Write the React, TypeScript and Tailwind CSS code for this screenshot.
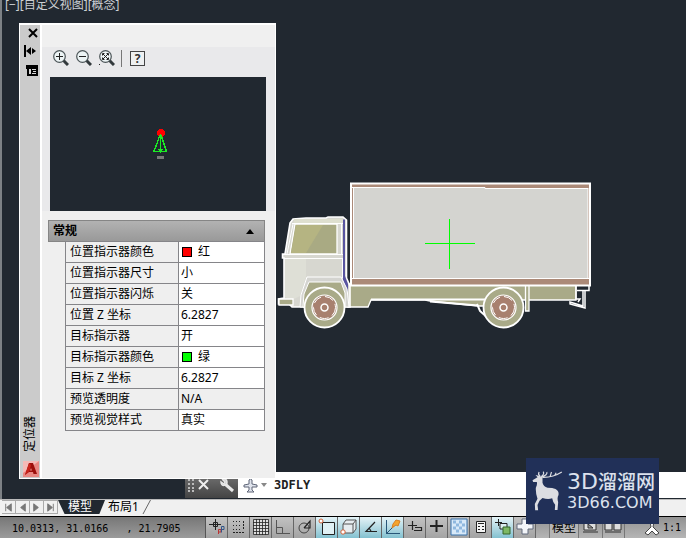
import React, { useState } from 'react';

type Property = { label: string; value: string; color?: 'red' | 'green'; readOnly?: boolean };

const PROPERTIES: Property[] = [
  { label: '位置指示器颜色', value: '红', color: 'red' },
  { label: '位置指示器尺寸', value: '小' },
  { label: '位置指示器闪烁', value: '关' },
  { label: '位置 Z 坐标', value: '6.2827' },
  { label: '目标指示器', value: '开' },
  { label: '目标指示器颜色', value: '绿', color: 'green' },
  { label: '目标 Z 坐标', value: '6.2827' },
  { label: '预览透明度', value: 'N/A', readOnly: true },
  { label: '预览视觉样式', value: '真实' },
];

const Truck: React.FC = () => (
  <svg className="absolute left-[275px] top-[178px] h-[152px] w-[320px]" viewBox="277 178 320 152" stroke="#fff" strokeWidth="1.3" role="img" aria-label="truck">
    {/* chassis */}
    <path d="M349 284H576V300H488V306H478L430 301L425 300H371L368 307H348Z" fill="#a9aa88" />
    <path d="M371 299.500H486M430 301.500L478 305.500M477 304L480 311L490 320" fill="none" strokeWidth="2" />
    <path d="M525.500 286V311H529V286" fill="#a9aa88" />
    <path d="M576 286V299H580L578 302M577 290.500H589V286" fill="none" strokeWidth="1.500" />
    <path d="M583 291V306L570 302V304L585 308V291" fill="none" strokeWidth="1.500" />
    {/* cargo box */}
    <path d="M351 183.500H590V285.500H351Z" fill="#ab8a78" strokeWidth="2" />
    <path d="M353.500 187.500H485V188.500H588V278.500H353.500Z" fill="#d4d4d0" stroke="none" />
    <path d="M352 187.500H485V188.500H588M351 278.500H590M353.500 188V278M588 188V278" fill="none" strokeWidth="1" />
    {/* cab */}
    <path d="M290 223L293 219L306 218L326 218L328 217H343L346.500 220V278L350 286V307H292L289 304H278.500V299L284 298V258H282.500V254H285Z" fill="#d7d7d0" strokeWidth="1.6" />
    <path d="M285 259H306V277L300 296L292 300L285 297Z" fill="#dedfd6" stroke="none" />
    <path d="M294 219H342L345 223H294Z" fill="#dedfcf" stroke="none" />
    <path d="M295 224H337V254H290Z" fill="#a9aa83" />
    <path d="M296 225H323L306 253H291Z" fill="#b5b482" stroke="none" />
    <path d="M292 223.500H345M283 254.500H345M284 258.500H345M341.500 224V254M342.500 258V278M293 224L287 254" fill="none" strokeWidth="1" />
    <path d="M343 219.500H345V276L348 284V293L343 280Z" fill="#5854a0" stroke="none" />
    <path d="M279 299H293V305H279Z" fill="#a9aa88" />
    <path d="M300 307L301 295L307 277H341L347 289L349 307Z" fill="#d4d4d0" strokeWidth="1" />
    <path d="M303 307L304 294L309 282H341L345 293V307Z" fill="#a9aa88" strokeWidth="1" />
    {[324.5, 503.5].map((cx) => (
      <g key={cx}>
        <circle cx={cx} cy="307.500" r="20" fill="#a9aa88" strokeWidth="1.8" />
        <circle cx={cx} cy="307.500" r="12.500" fill="#ab8a78" strokeWidth="1.200" />
        <circle cx={cx} cy="307.500" r="11" fill="#a8806f" strokeWidth="1" strokeDasharray="9 4" />
        <circle cx={cx} cy="307.500" r="3.500" fill="#a8806f" strokeWidth="1.5" />
      </g>
    ))}
    {/* 3D crosshair */}
    <path d="M425 243H475V244H425ZM449 219H450V269H449Z" fill="#0f0" stroke="none" />
  </svg>
);

const Magnifier: React.FC<{ kind: 'in' | 'out' | 'extents' }> = ({ kind }) => (
  <svg className="h-4 w-4" viewBox="0 0 16 16" fill="none">
    <path d="M10.500 10.500L15 15" stroke="#333a3d" strokeWidth="3" />
    <circle cx="6.500" cy="6.500" r="5.800" fill="#edf4f5" stroke="#4c5558" strokeWidth="1.200" />
    {kind === 'in' && <path d="M3 6.500H10M6.500 3V10" stroke="#222" />}
    {kind === 'out' && <path d="M3 6.500H10" stroke="#222" />}
    {kind === 'extents' && <path d="M3.500 5.500V3.500H5.500M7.500 3.500H9.500V5.500M9.500 7.500V9.500H7.500M5.500 9.500H3.500V7.500M4 4L9 9M9 4L4 9" stroke="#222" />}
    {kind === 'extents' && <path d="M0 14H1V15H0Z" fill="#222" />}
  </svg>
);

const Palette: React.FC = () => {
  const [open, setOpen] = useState(true);

  return (
    <section className="absolute bottom-[20px] left-[17px] top-[23px] flex w-[257px] border border-t-2 border-white bg-[#efefef]">
      <div className="flex w-[20px] flex-col items-center bg-[#cbcbcb]">
        <button aria-label="关闭" className="mt-[2px] ml-[6px] h-[12px] w-[12px]">
          <svg viewBox="0 0 12 12" stroke="#000" strokeWidth="2"><path d="M2 2L10 10M10 2L2 10" /></svg>
        </button>
        <button aria-label="自动隐藏" className="mt-[6px] h-[12px] w-[14px]">
          <svg viewBox="0 0 14 12"><path d="M1 0H3V12H1ZM8 2V10L3 6ZM9 3V9L13 6Z" /></svg>
        </button>
        <button aria-label="特性" className="mt-[8px] ml-[4px] h-[12px] w-[12px]">
          <svg viewBox="0 0 12 12"><path d="M0 0H12V11H1V4H0Z" /><path d="M3 4H5V9H3ZM6 4H10V5H6ZM7 6H10V7H7ZM6 8H10V9H6Z" fill="#d5d5d5" /></svg>
        </button>
        <h2 className="mt-auto mb-[9px] rotate-180 text-xs leading-[14px] [text-orientation:sideways] [writing-mode:vertical-rl]">定位器</h2>
        <svg className="mb-px ml-[2px] h-[16px] w-[16px]" viewBox="0 0 16 16">
          <path d="M0 0H16V16H0Z" fill="#e98782" />
          <path d="M0 0H16L0 12Z" fill="#f5b9b6" />
          <path d="M6 2H10L14 13H10.500L10 11H6L2 14Z" fill="#9c0f0b" />
          <path d="M6 2L8 4L6.500 10L2 14Z" fill="#c8231b" />
          <path d="M8 7L9 9.500H7Z" fill="#e98782" />
        </svg>
      </div>
      <div className="flex-1 border-l-2 border-white">
        <div className="h-[22px] bg-[#f0f0f0]" />
        <div className="flex h-[30px] items-center gap-[7px] bg-[#e9e9eb] pb-2 pl-[11px]">
          <button aria-label="放大"><Magnifier kind="in" /></button>
          <button aria-label="缩小"><Magnifier kind="out" /></button>
          <button aria-label="范围缩放"><Magnifier kind="extents" /></button>
          <div className="-ml-px h-[17px] w-px bg-[#777]" />
          <button aria-label="帮助" className="ml-px h-[15px] w-[15px] border border-[#444] bg-[#eef0f1] text-[12px] font-bold leading-[13px] text-[#333]">?</button>
        </div>
        <div className="bg-[#e9e9eb]">
          <div className="ml-[8px] mr-[9px] flex h-[134px] items-center justify-center bg-[#212830]">
            <svg className="ml-[4px] h-[30px] w-[16px]" viewBox="0 0 16 30" fill="none" shapeRendering="crispEdges">
              <circle cx="9" cy="4" r="4" fill="#f00" />
              <path d="M8.500 5V24M8 6L2 22.500H14.500L9 6M5 14L2 22M12 14L14 22" stroke="#1bea25" strokeWidth="1.300" />
              <path d="M6 20H11L8.500 24Z" fill="#1bea25" />
              <path d="M5 27H12V30H5Z" fill="#777" />
            </svg>
          </div>
        </div>
        <div className="mr-[10px] ml-[6px] mt-[9px] text-xs text-black">
          <button onClick={() => setOpen(!open)} className="flex h-[22px] w-full items-center justify-between border border-[#858585] bg-linear-to-b from-[#b2b2b2] to-[#999] pl-1 pr-[10px] font-bold">
            常规
            <svg className="h-[5px] w-[8px]" viewBox="0 0 8 5"><path d="M4 0L8 5H0Z" /></svg>
          </button>
          {open && (
            <div className="-mt-px pl-[17px]">
              <table className="w-full table-fixed border-collapse">
                <tbody>
                  {PROPERTIES.map((p) => (
                    <tr key={p.label} className="h-[21px]">
                      <th scope="row" className="w-[113px] border border-[#858589] p-0 pl-1 text-left font-normal leading-[20px]">{p.label}</th>
                      <td className={`border border-[#858589] p-0 pl-[2px] leading-[20px] ${p.readOnly ? 'bg-[#efefef]' : 'bg-white'}`}>
                        <span className="flex items-center gap-[6px]">
                          {p.color && <span className={`ml-px h-[10px] w-[10px] border border-black ${p.color === 'red' ? 'bg-[#f00]' : 'bg-[#0f0]'}`} />}
                          {p.value}
                        </span>
                      </td>
                    </tr>
                  ))}
                </tbody>
              </table>
            </div>
          )}
        </div>
      </div>
    </section>
  );
};

const CommandLine: React.FC = () => (
  <form className="absolute bottom-px left-[183px] right-0 flex h-[26px] bg-white">
    <div className="flex w-[53px] items-center gap-2 bg-linear-to-b from-[#777] to-[#444] pl-[3px]">
      <svg className="h-[14px] w-[6px]" viewBox="0 0 6 14" fill="#bbb"><path d="M0 1H2V3H0ZM4 1H6V3H4ZM0 5H2V7H0ZM4 5H6V7H4ZM0 9H2V11H0ZM4 9H6V11H4ZM0 12H2V14H0ZM4 12H6V14H4Z" /></svg>
      <button type="button" aria-label="关闭命令行" className="ml-[-5px] h-[14px] w-[14px]">
        <svg viewBox="0 0 14 14" stroke="#eee" strokeWidth="2"><path d="M2 2L11 11M11 2L2 11" /></svg>
      </button>
      <button type="button" aria-label="自定义" className="h-[16px] w-[16px]">
        <svg viewBox="0 0 16 16" fill="none" stroke="#e8e8e8"><path d="M6 7L14 14" strokeWidth="3" /><path d="M3 2L6 5L5 7L2 5C2 10 8 9 8 5C8 2 5 1 3 2" strokeWidth="1.500" fill="#ccc" /></svg>
      </button>
    </div>
    <button type="button" aria-label="最近使用的命令" className="flex items-center gap-[3px] pl-[5px]">
      <svg className="h-[15px] w-[15px]" viewBox="0 0 15 15" fill="#dfe3ec" stroke="#5e6577"><path d="M6 6V2Q7.500 0 9 2V6L14 7V9H9V12L11 14H4L6 12V9H1V7Z" /></svg>
      <svg className="h-[4px] w-[6px]" viewBox="0 0 6 4" fill="#888"><path d="M0 0H6L3 4Z" /></svg>
    </button>
    <input aria-label="命令" defaultValue="3DFLY" className="ml-[7px] min-w-0 flex-1 bg-transparent font-['DejaVu_Sans_Mono',monospace] text-[12px] font-bold text-[#222] outline-none" />
  </form>
);

const LayoutTabs: React.FC = () => (
  <nav className="flex h-[17px] shrink-0 border-t border-[#bbb] bg-[#f0f0f0] pl-[2px] text-xs">
    {[
      { label: '第一个', d: 'M4 3V11M10 3V11L5 7Z' },
      { label: '上一个', d: 'M10 3V11L5 7Z' },
      { label: '下一个', d: 'M4 3V11L9 7Z' },
      { label: '最后一个', d: 'M10 3V11M4 3V11L9 7Z' },
    ].map((b) => (
      <button key={b.label} aria-label={b.label} className="h-[14px] w-[14px] border border-l-0 border-[#aaa]">
        <svg viewBox="0 0 14 14" fill="#777" stroke="#777"><path d={b.d} /></svg>
      </button>
    ))}
    <button className="h-[14px] w-[47px] bg-[#212830] pr-[3px] leading-[14px] text-white [clip-path:polygon(0_0,100%_0,88%_100%,14%_100%)]">模型</button>
    <button className="h-[14px] pl-[3px] leading-[14px] text-black">布局1</button>
    <svg className="ml-[3px] h-[14px] w-[9px]" viewBox="0 0 9 14" stroke="#666"><path d="M8.500 0L1 14" /></svg>
  </nav>
);

const TOGGLES: { label: string; on?: boolean; icon: React.ReactNode }[] = [
  { label: '推断约束', icon: <><path d="M7.500 1V12M1 6.500H13M5.500 4.500H9.500V8.500H5.500Z" /><path d="M10.500 16V11.500H13V14H11" stroke="#b33" /><path d="M13.500 14.500V8.500H16V11.500H14" stroke="#358" /></> },
  { label: '捕捉', icon: <><path d="M3 3.500H12M3 7.500H12M3 11.500H12" strokeDasharray="1 2" /><path d="M13.500 3V12M3 14.500H14" strokeDasharray="2 1" /></> },
  { label: '栅格', icon: <path d="M1.500 1.500H16.500V16.500H1.500ZM4.500 1V17M7.500 1V17M10.500 1V17M13.500 1V17M1 4.500H17M1 7.500H17M1 10.500H17M1 13.500H17" strokeWidth="0.800" fill="#ddd" /> },
  { label: '正交', icon: <path d="M2.500 2V15.500H16M3 9.500H8.500V15" stroke="#555" /> },
  { label: '极轴', icon: <><circle cx="8" cy="10" r="5" stroke="#444" /><path d="M8 10L14 3V10H8" strokeWidth="1.200" /></> },
  { label: '对象捕捉', on: true, icon: <><path d="M4.500 4.500H16.500V16.500H4.500Z" fill="#e0f1f5" /><circle cx="3" cy="3" r="2" stroke="#d26036" fill="#fff" /></> },
  { label: '三维对象捕捉', on: true, icon: <><path d="M3 6L6 2H16V11L13 15H3ZM3 6H13V15M13 6L16 2" fill="#e7edf0" stroke="#555" /><circle cx="3" cy="14" r="2.200" stroke="#d26036" fill="#fff" /></> },
  { label: '对象追踪', on: true, icon: <path d="M13 4L4 13.500H15M7 10L9 13" strokeWidth="1.200" /> },
  { label: '动态UCS', on: true, icon: <><path d="M2.500 2V15.500H16M2 16L12 6" stroke="#285678" /><path d="M9 6L12 2L16 3L14 8L12 7L8 10Z" fill="#f5a52d" stroke="#d77e23" /></> },
  { label: '动态输入', icon: <path d="M2 7.500H11M6.500 3V12M9 9.500H15.500V12.500H8" strokeWidth="1.200" /> },
  { label: '线宽', icon: <path d="M2 8H15M8.500 2V14" strokeWidth="2" /> },
  { label: '透明度', icon: <><path d="M1 1H17V17H1Z" fill="#d8e9f8" stroke="#3972ad" /><path d="M3 4H15M3 10H15" stroke="#8fb8df" strokeWidth="3" strokeDasharray="3 3" /><path d="M6 7H15M6 13H15" stroke="#8fb8df" strokeWidth="3" strokeDasharray="3 3" /></> },
  { label: '快捷特性', icon: <><path d="M4.500 3.500H13.500V14.500H4.500Z" fill="#f5f5f5" /><path d="M6 5.500H12M6 8.500H8M10 8.500H12M6 11.500H8M10 11.500H12" /></> },
  { label: '选择循环', on: true, icon: <><path d="M1 4.500H8M4.500 1V8" /><path d="M6 5.500H13V11H6Z" fill="#dceef0" /><path d="M9 9H16V16H9Z" fill="#7db864" stroke="#34672b" /></> },
  { label: '注释监视器', icon: <path d="M6 1H12V6H17V11H12V16H6V11H1V6H6Z" fill="#f2f4f8" stroke="#626b7c" /> },
];

const StatusBar: React.FC = () => (
  <footer className="flex h-[22px] shrink-0 overflow-hidden border-t border-black bg-linear-to-b from-[#929292] to-[#b5b5b5] text-black">
    <output className="w-[206px] shrink-0 whitespace-pre border-r border-[#555] bg-linear-to-b from-[#777] to-[#9b9b9b] pl-[12px] pt-[3px] font-['DejaVu_Sans_Mono',monospace] text-[10px] leading-[18px]">{'10.0313, 31.0166   , 21.7905'}</output>
    {TOGGLES.map((t) => (
      <button key={t.label} aria-label={t.label} aria-pressed={!!t.on} className={`flex w-[22px] shrink-0 justify-center border-r border-[#666] pt-px ${t.on ? 'bg-linear-to-b from-[#e4f3f7] to-[#83c1d0]' : 'bg-linear-to-b from-[#c2c2c2] to-[#a3a3a3]'}`}>
        <svg className="h-[18px] w-[18px]" viewBox="0 0 18 18" fill="none" stroke="#222">{t.icon}</svg>
      </button>
    ))}
    <div className="ml-auto flex text-xs leading-[21px]">
      <button className="border-x border-[#777] bg-[#b5b5b5] px-[2px]">模型</button>
      <button aria-label="快速查看布局" className="w-[24px] border-r border-[#777] pt-[1px] pl-[3px]">
        <svg className="h-[18px] w-[18px]" viewBox="0 0 18 18" fill="#ddd" stroke="#333"><path d="M2 3H14V11H2ZM1 13H16M6 5V9H11Z" /></svg>
      </button>
      <button aria-label="快速查看图形" className="w-[22px] border-r border-[#777] pt-[1px] pl-px">
        <svg className="h-[18px] w-[18px]" viewBox="0 0 18 18" fill="#ddd" stroke="#333"><path d="M1 4H8V11H1ZM10 4H17V11H10ZM1 13H17" /></svg>
      </button>
      <button className="flex items-center gap-[3px] pl-[19px] pr-[5px] font-['DejaVu_Sans_Mono',monospace] text-[10px]">
        <svg className="h-[16px] w-[16px]" viewBox="0 0 16 16" fill="#fff" stroke="#444"><path d="M6 1H10L9 7L15 13L12 15L8 11L4 15L1 13L7 7Z" /></svg>
        1:1
      </button>
    </div>
  </footer>
);

const Watermark: React.FC = () => (
  <div className="absolute bottom-[14px] right-[27px] flex h-[66px] w-[133px] items-center bg-[#213058] pl-[5px] text-[#dce1ed]">
    <svg className="h-[40px] w-[32px] shrink-0" viewBox="15 38 95 120" fill="#dcdde2">
      <path d="M19 66L34 57L28 50L41 53L49 57L49 73Q52 85 64 88Q80 88 88 92Q99 98 97 110Q92 118 96 132L94 155H86L87 139Q80 132 78 120Q65 124 49 119L40 127L34 140L36 156H27L26 137L34 121Q28 105 29 88Q34 78 32 71L21 71Z" />
      <path d="M42 54Q34 48 39 41M45 55Q56 47 51 40M46 56Q65 50 62 41M49 57Q80 58 107 41M72 54L76 41M85 52L90 43" fill="none" stroke="#dcdde2" strokeWidth="3.500" />
    </svg>
    <div className="ml-[4px] whitespace-nowrap font-['DejaVu_Sans','Noto_Sans_CJK_SC',sans-serif]">
      <div className="text-[19px] font-medium leading-[24px]"><span className="text-[22px]">3D</span>溜溜网</div>
      <div className="text-[16px] leading-[18px]">3D66.COM</div>
    </div>
  </div>
);

export default function App() {
  return (
    <div className="relative flex h-screen flex-col overflow-hidden font-['Noto_Sans','Noto_Sans_CJK_SC',sans-serif]">
      <main className="relative flex-1 overflow-hidden border-l-2 border-[#7d8185] bg-[#212830]">
        <p className="pl-[3px] text-xs leading-[10px] text-[#ccd0d4]">[−][自定义视图][概念]</p>
        <Truck />
        <CommandLine />
        <Palette />
      </main>
      <LayoutTabs />
      <StatusBar />
      <Watermark />
    </div>
  );
}
